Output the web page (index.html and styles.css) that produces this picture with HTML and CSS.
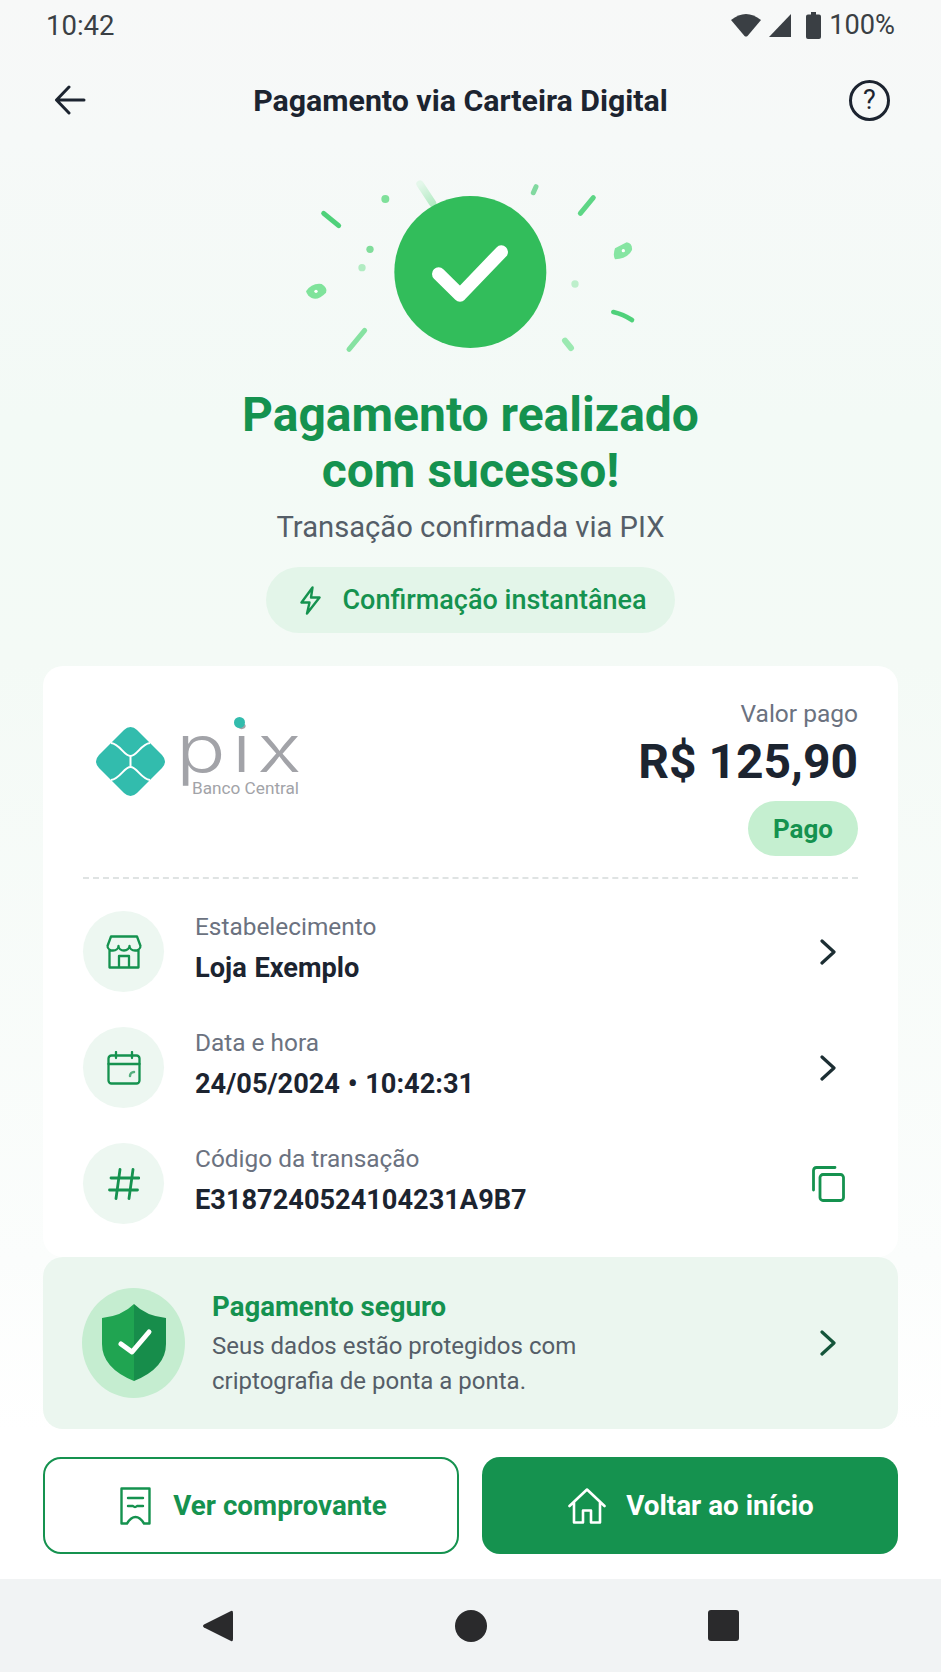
FILE: index.html
```html
<!DOCTYPE html>
<html lang="pt-BR">
<head>
    <meta charset="UTF-8">
    <meta name="viewport" content="width=device-width, initial-scale=1.0">
    <title>Pagamento via Carteira Digital</title>
    <link rel="stylesheet" href="styles.css">
</head>
<body>
  <div class="screen">
    <div class="status-bar">
      <span class="status-time">10:42</span>
      <div class="status-icons">
        <svg class="icon-wifi" width="30" height="24" viewBox="0 0 30 24"><path d="M0 7Q15 -5 30 7L16.500 23Q15 24 13.500 23Z" fill="#3a3f44"/></svg>
        <svg class="icon-signal" width="24" height="24" viewBox="0 0 24 24"><path d="M23 1V24H1Z" fill="#3a3f44"/></svg>
        <svg class="icon-battery" width="15" height="27" viewBox="0 0 15 27"><path d="M5 0H10V2.500H13Q15 2.500 15 4.500V25Q15 27 13 27H2Q0 27 0 25V4.500Q0 2.500 2 2.500H5Z" fill="#3a3f44"/></svg>
        <span>100%</span>
      </div>
    </div>

    <header class="toolbar">
      <svg class="back" width="34" height="30" viewBox="0 0 34 30" fill="none" stroke="#1c2430" stroke-width="3" stroke-linecap="round" stroke-linejoin="round"><path d="M30 15H3M15 2L2.500 15L15 28"/></svg>
      <h1>Pagamento via Carteira Digital</h1>
      <span class="help">?</span>
    </header>

    <main class="content">
      <section class="hero">
        <svg class="hero-art" width="380" height="210" viewBox="0 0 1140 630" fill="none" stroke-linecap="round">
          <defs>
            <linearGradient id="fade" gradientUnits="userSpaceOnUse" x1="420" y1="72" x2="458" y2="130">
              <stop offset="0" stop-color="#e4f7ea"/>
              <stop offset="1" stop-color="#b5ebc5"/>
            </linearGradient>
          </defs>
          <path d="M420 72L458 130" stroke="url(#fade)" stroke-width="22"/>
          <circle cx="571" cy="336" r="228" fill="#32bd5b"/>
          <path d="M476 342L540 405L664 276" stroke="#fff" stroke-width="40" stroke-linejoin="round"/>
          <circle cx="316" cy="117" r="12" fill="#7fe09a"/>
          <circle cx="270" cy="268" r="11" fill="#80dd9b"/>
          <circle cx="246" cy="323" r="11" fill="#b1ecc2"/>
          <circle cx="885" cy="372" r="11" fill="#bdefcb"/>
          <path d="M131 160L176 197" stroke="#4fd17a" stroke-width="15"/>
          <path d="M254 511L207 568" stroke="#86e2a1" stroke-width="15"/>
          <path d="M940 113L901 160" stroke="#5dd685" stroke-width="15"/>
          <path d="M1000 456Q1030 463 1056 480" stroke="#4fd17a" stroke-width="14"/>
          <path d="M855 542L873 564" stroke="#9be9b1" stroke-width="18"/>
          <path d="M768 80L760 98" stroke="#82d9a0" stroke-width="15"/>
          <path d="M78 394Q95 368 125 372Q145 385 138 398Q115 422 95 414Q82 408 78 394Z" fill="#7fe39b"/>
          <circle cx="108" cy="394" r="5" fill="#fff"/>
          <path d="M1005 265L1040 247Q1058 250 1056 270Q1045 295 1005 298Q998 285 1005 265Z" fill="#86e5a2"/>
          <circle cx="1030" cy="272" r="5" fill="#fff"/>
        </svg>
        <h2>Pagamento realizado<br>com sucesso!</h2>
        <p class="hero-sub">Transação confirmada via PIX</p>
        <div class="pill">
          <svg width="21" height="29" viewBox="0 0 21 29" fill="none" stroke="#15924f" stroke-width="2.400" stroke-linejoin="round" stroke-linecap="round"><path d="M12.500 1.500L1.500 16.500H9.500L7 27.500L19.500 11.500H11Z"/></svg>
          <span>Confirmação instantânea</span>
        </div>
      </section>

      <section class="card">
        <div class="card-top">
          <div class="pix-logo">
            <svg width="69" height="69" viewBox="0 0 69 69"><path d="M34.500 0Q38 0 41 3L66 28Q72 34.500 66 41L41 66Q34.500 72 28 66L3 41Q-3 34.500 3 28L28 3Q31 0 34.500 0Z" fill="#32bcad"/><path d="M15 16C24 17 28 29 34.500 29C41 29 45 17 54 16M15 53C24 52 28 40 34.500 40C41 40 45 52 54 53M34.500 29V40" fill="none" stroke="#fff" stroke-width="2"/></svg>
            <div class="pix-word">
              <span class="pix-name">pix</span>
              <span class="pix-bank">Banco Central</span>
              <i class="pix-dot"></i>
            </div>
          </div>
          <div class="amount">
            <span class="amount-label">Valor pago</span>
            <strong class="amount-value">R$ 125,90</strong>
            <span class="amount-tag">Pago</span>
          </div>
        </div>

        <div class="rows">
          <div class="row">
            <div class="row-icon">
              <svg width="36" height="34" viewBox="0 0 36 34" fill="none" stroke="#15924f" stroke-width="2.300" stroke-linejoin="round" stroke-linecap="round"><path d="M1.500 11L5 1.500H31L34.500 11M1.500 11A5.500 4.500 0 0 0 12.500 11A5.500 4.500 0 0 0 23.500 11A5.500 4.500 0 0 0 34.500 11M3.500 15V32.500H32.500V15M13 32V21H23V32"/></svg>
            </div>
            <div class="row-text">
              <span class="row-label">Estabelecimento</span>
              <span class="row-value">Loja Exemplo</span>
            </div>
            <svg class="chevron" width="16" height="26" viewBox="0 0 16 26" fill="none" stroke="#1c2e33" stroke-width="3.200" stroke-linecap="round" stroke-linejoin="round"><path d="M2 2L14 13L2 24"/></svg>
          </div>
          <div class="row">
            <div class="row-icon">
              <svg width="34" height="34" viewBox="0 0 34 34" fill="none" stroke="#15924f" stroke-width="2.300" stroke-linecap="round" stroke-linejoin="round"><rect x="1.500" y="4.500" width="31" height="28" rx="3"/><path d="M1.500 13H32.500M9 1V7M25 1V7"/><path d="M27 21A4 4 0 0 0 23 25" stroke-width="2.500" opacity="0.7"/></svg>
            </div>
            <div class="row-text">
              <span class="row-label">Data e hora</span>
              <span class="row-value">24/05/2024 • 10:42:31</span>
            </div>
            <svg class="chevron" width="16" height="26" viewBox="0 0 16 26" fill="none" stroke="#1c2e33" stroke-width="3.200" stroke-linecap="round" stroke-linejoin="round"><path d="M2 2L14 13L2 24"/></svg>
          </div>
          <div class="row">
            <div class="row-icon">
              <svg width="32" height="32" viewBox="0 0 32 32" fill="none" stroke="#15924f" stroke-width="2.800" stroke-linecap="round"><path d="M12 1.500L8 30.500M25 1.500L21 30.500M3 10H31M1.500 22H29.500"/></svg>
            </div>
            <div class="row-text">
              <span class="row-label">Código da transação</span>
              <span class="row-value">E3187240524104231A9B7</span>
            </div>
            <svg class="copy" width="33" height="36" viewBox="0 0 33 36" fill="none" stroke="#15924f" stroke-width="2.800" stroke-linecap="round" stroke-linejoin="round"><rect x="8" y="8.500" width="23.500" height="26" rx="3"/><path d="M1.500 24V4.500Q1.500 1.500 4.500 1.500H23"/></svg>
          </div>
        </div>
      </section>

      <section class="secure">
        <div class="secure-badge">
          <svg width="64" height="78" viewBox="0 0 64 78"><path d="M32 0Q44 12 64 14V40Q64 64 32 77Z" fill="#178d4b"/><path d="M32 0Q20 12 0 14V40Q0 64 32 77Z" fill="#20a451"/><path d="M19 40L30 48L47 28" fill="none" stroke="#fff" stroke-width="5" stroke-linecap="round" stroke-linejoin="round"/></svg>
        </div>
        <div class="secure-text">
          <h3>Pagamento seguro</h3>
          <p>Seus dados estão protegidos com<br>criptografia de ponta a ponta.</p>
        </div>
        <svg class="chevron" width="16" height="26" viewBox="0 0 16 26" fill="none" stroke="#14553a" stroke-width="3.200" stroke-linecap="round" stroke-linejoin="round"><path d="M2 2L14 13L2 24"/></svg>
      </section>
    </main>

    <div class="actions">
      <button class="btn btn-outline">
        <svg width="31" height="38" viewBox="0 0 31 38" fill="none" stroke="#15924f" stroke-width="2.400" stroke-linejoin="round" stroke-linecap="round"><path d="M1.500 1.500H29.500V36.500H24Q20 30 15.500 30Q11 30 7 36.500H1.500ZM8 11H23M8 19H13Q15 21 17 19H23"/></svg>
        <span>Ver comprovante</span>
      </button>
      <button class="btn btn-solid">
        <svg width="38" height="36" viewBox="0 0 38 36" fill="none" stroke="#fff" stroke-width="2.600" stroke-linejoin="round" stroke-linecap="round"><path d="M1.500 18L19 1.500L36.500 18M6 14.500V34.500H15V22.500H23V34.500H32V14.500"/></svg>
        <span>Voltar ao início</span>
      </button>
    </div>

    <nav class="nav-bar">
      <svg width="32" height="34" viewBox="0 0 32 34"><path d="M29 2Q31 1 31 4V30Q31 33 29 32L2 18.500Q0 17 2 15.500Z" fill="#2a2a2c"/></svg>
      <i class="nav-circle"></i>
      <i class="nav-square"></i>
    </nav>
  </div>
</body>
</html>
```

FILE: styles.css
```css
:root {
  --clr-green: #15924f;
  --clr-dark: #1c2430;
  --clr-muted: #6b7280;
}
* { margin: 0; padding: 0; box-sizing: border-box; }
body {
  font-family: Roboto, 'Noto Sans', sans-serif;
  color: var(--clr-dark);
  background: #fff;
}
.screen {
  width: 941px;
  height: 1672px;
  display: flex;
  flex-direction: column;
  overflow: hidden;
  background: linear-gradient(180deg, #f7f8f8 0, #f6f9f8 140px, #f3faf6 420px, #f4faf6 660px, #fbfdfc 1260px, #fff 1430px);
}
.status-bar {
  height: 50px;
  padding: 0 46px 0 46px;
  display: flex;
  align-items: center;
  justify-content: space-between;
  font-size: 27.500px;
  color: #3a3f44;
}
.status-icons {
  display: flex;
  align-items: center;
}
.status-icons span {
  margin-left: 8px;
  font-size: 27.200px;
}
.icon-signal { margin-left: 7px; }
.icon-battery { margin-left: 14px; }
.toolbar {
  height: 102px;
  padding: 0 51px 2px 54px;
  display: flex;
  align-items: center;
  justify-content: space-between;
}
.toolbar h1 {
  margin-right: 16px;
  font-size: 30.300px;
  font-weight: 700;
}
.help {
  width: 41px;
  height: 41px;
  border: 3px solid var(--clr-dark);
  border-radius: 50%;
  display: flex;
  align-items: center;
  justify-content: center;
  font-size: 27px;
  font-weight: 400;
}
.content {
  flex: 1;
  padding: 0 43px;
  display: flex;
  flex-direction: column;
}
.hero {
  margin-top: 8px;
  display: flex;
  flex-direction: column;
  align-items: center;
}
.hero-art {
  display: block;
  margin-right: 2px;
}
.hero h2 {
  margin-top: 17px;
  font-size: 48px;
  line-height: 56px;
  font-weight: 700;
  text-align: center;
  color: var(--clr-green);
}
.hero-sub {
  margin-top: 10px;
  font-size: 29.200px;
  line-height: 36px;
  color: #555e68;
}
.pill {
  margin-top: 22px;
  height: 66px;
  padding: 0 28px 0 34px;
  display: flex;
  align-items: center;
  gap: 21px;
  border-radius: 33px;
  background: #e3f5e9;
  color: var(--clr-green);
  font-size: 27px;
  font-weight: 500;
}
.card {
  margin-top: 33px;
  height: 591px;
  padding: 0 40px;
  background: #fff;
  border-radius: 20px;
}
.card-top {
  height: 213px;
  padding-top: 34px;
  display: flex;
  justify-content: space-between;
  border-bottom: 2px dashed #dfe3e3;
}
.pix-logo {
  margin: 24px 0 0 13px;
  height: 74px;
  display: flex;
  align-items: center;
  gap: 15px;
}
.pix-word {
  position: relative;
  width: 120px;
  height: 74px;
  color: #a2a3a8;
}
.pix-name {
  display: block;
  height: 48px;
  margin-left: -4px;
  font-family: Inter, sans-serif;
  font-size: 66px;
  line-height: 48px;
  font-weight: 300;
  letter-spacing: 5px;
  transform: scaleX(1.25);
  transform-origin: left center;
}
.pix-bank {
  display: block;
  margin: 6px 0 0 12px;
  font-size: 17.200px;
  line-height: 20px;
  white-space: nowrap;
}
.pix-dot {
  position: absolute;
  top: -7px;
  left: 54px;
  width: 11px;
  height: 11px;
  border-radius: 50%;
  background: #32bcad;
}
.amount {
  display: flex;
  flex-direction: column;
  align-items: flex-end;
}
.amount-label {
  font-size: 24.500px;
  line-height: 28px;
  color: var(--clr-muted);
}
.amount-value {
  margin-top: 7px;
  font-size: 48px;
  line-height: 54px;
}
.amount-tag {
  margin-top: 12px;
  width: 110px;
  height: 55px;
  border-radius: 28px;
  background: #c5efd0;
  color: var(--clr-green);
  font-size: 26px;
  font-weight: 700;
  display: flex;
  align-items: center;
  justify-content: center;
}
.rows {
  padding-top: 32px;
  display: flex;
  flex-direction: column;
  gap: 35px;
}
.row {
  height: 81px;
  display: flex;
  align-items: center;
}
.row-icon {
  flex: none;
  width: 81px;
  height: 81px;
  border-radius: 50%;
  background: #edf7f1;
  display: flex;
  align-items: center;
  justify-content: center;
}
.row-text {
  flex: 1;
  margin-left: 31px;
  padding-bottom: 7px;
  display: flex;
  flex-direction: column;
  gap: 12px;
}
.row-label {
  font-size: 24.400px;
  line-height: 28px;
  color: var(--clr-muted);
}
.row-value {
  font-size: 27.200px;
  line-height: 31px;
  font-weight: 700;
  word-spacing: 1px;
}
.chevron {
  flex: none;
  margin-right: 22px;
}
.copy {
  flex: none;
  margin-right: 13px;
}
.secure {
  height: 172px;
  padding: 0 40px 0 39px;
  display: flex;
  align-items: center;
  background: #ebf6ef;
  border-radius: 20px;
}
.secure-badge {
  flex: none;
  width: 103px;
  height: 110px;
  border-radius: 50%;
  background: #c5edd0;
  display: flex;
  align-items: center;
  justify-content: center;
}
.secure-text {
  flex: 1;
  margin-left: 27px;
  padding-top: 3px;
}
.secure-text h3 {
  font-size: 27.600px;
  line-height: 34px;
  font-weight: 700;
  color: var(--clr-green);
}
.secure-text p {
  margin-top: 5px;
  font-size: 24px;
  line-height: 35px;
  color: #555e68;
}
.actions {
  height: 150px;
  padding: 28px 43px 0;
  display: grid;
  grid-template-columns: 1fr 1fr;
  gap: 23px;
  background: #fff;
}
.btn {
  height: 97px;
  border-radius: 18px;
  display: flex;
  align-items: center;
  justify-content: center;
  gap: 22px;
  font-family: inherit;
  font-size: 27.800px;
  font-weight: 700;
}
.btn-outline {
  padding-left: 5px;
  border: 2px solid var(--clr-green);
  background: #fff;
  color: var(--clr-green);
}
.btn-solid {
  padding-left: 2px;
  gap: 20px;
  border: none;
  background: var(--clr-green);
  color: #fff;
}
.nav-bar {
  height: 93px;
  flex: none;
  padding: 0 202px;
  display: flex;
  align-items: center;
  justify-content: space-between;
  background: #f1f3f4;
}
.nav-circle {
  width: 32px;
  height: 32px;
  border-radius: 50%;
  background: #2a2a2c;
}
.nav-square {
  width: 31px;
  height: 31px;
  border-radius: 3px;
  background: #2a2a2c;
}
```
